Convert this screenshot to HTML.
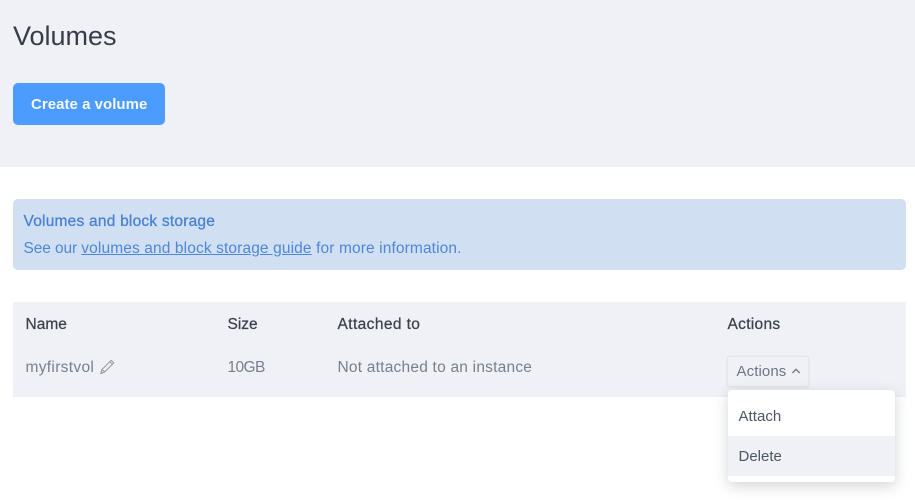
<!DOCTYPE html>
<html><head><meta charset="utf-8"><style>
html,body{margin:0;padding:0;background:#fff}
body{width:915px;height:500px;position:relative;overflow:hidden;font-family:"Liberation Sans",sans-serif}
.a{position:absolute;white-space:nowrap}
.h{font-size:15.5px;line-height:18px;color:#3b424d;-webkit-text-stroke:.25px #3b424d;top:315.5px}
.c{font-size:15.5px;line-height:18px;color:#77808f;top:358.5px}
.m{font-size:15px;line-height:18px;color:#4d5563}
</style></head><body>
<div class="a" style="left:0;top:0;width:915px;height:167px;background:#f0f1f6"></div>
<div class="a" style="left:13px;top:20px;font-size:27px;line-height:32px;color:#363d47">Volumes</div>
<div class="a" style="left:13px;top:83px;width:152px;height:42px;border-radius:5px;background:#4c9bff"></div>
<div class="a" style="left:31px;top:95.5px;font-size:15px;line-height:18px;font-weight:bold;color:#f3f8ff;letter-spacing:.03px">Create a volume</div>

<div class="a" style="left:13px;top:199px;width:893px;height:71px;border-radius:5px;background:#d0dff2"></div>
<div class="a" style="left:23.5px;top:212.5px;font-size:15.5px;line-height:18px;color:#4a81d2;letter-spacing:.22px;-webkit-text-stroke:.3px #4a81d2">Volumes and block storage</div>
<div class="a" style="left:23.5px;top:239.5px;font-size:15.5px;line-height:18px;color:#4f87d6;letter-spacing:.12px"><span style="letter-spacing:-.1px">See our </span><span style="text-decoration:underline">volumes and block storage guide</span> for more information.</div>

<div class="a" style="left:13px;top:302px;width:893px;height:95px;background:#f0f1f6"></div>
<div class="a h" style="left:25.5px">Name</div>
<div class="a h" style="left:227.5px">Size</div>
<div class="a h" style="left:337.5px;letter-spacing:.4px">Attached to</div>
<div class="a h" style="left:727.5px;letter-spacing:.3px">Actions</div>

<div class="a c" style="left:25.5px;letter-spacing:.32px">myfirstvol</div>
<svg class="a" style="left:99px;top:359px" width="16" height="16" viewBox="0 0 16 16" fill="none" stroke="#8d95a2" stroke-width="1" stroke-linejoin="round"><path d="M12.2 1.3 14.8 3.8 5.6 13 1.6 14.6 2.9 10.5Z"/><path d="M2.9 10.5 5.6 13M10.8 2.7 13.4 5.2"/></svg>
<div class="a c" style="left:227.5px;letter-spacing:-.6px">10GB</div>
<div class="a c" style="left:337.5px;letter-spacing:.22px">Not attached to an instance</div>

<div class="a" style="left:728px;top:357px;width:80px;height:29px;border-radius:2px;background:#f0f1f6;box-shadow:0 0 0 1.5px #e4e6ec,0 1px 3px rgba(0,0,0,.1)"></div>
<div class="a" style="left:736.5px;top:362.5px;font-size:15px;line-height:18px;color:#6d7685;letter-spacing:.1px">Actions</div>
<svg class="a" style="left:790.5px;top:367px" width="11" height="9" viewBox="0 0 11 9" fill="none" stroke="#6d7685" stroke-width="1.3"><path d="M1.5 6 5 2.3 8.8 6"/></svg>

<div class="a" style="left:728px;top:390px;width:167px;height:92px;border-radius:4px;background:#fff;box-shadow:0 4px 14px rgba(30,40,60,.2);overflow:hidden">
<div style="position:absolute;left:0;top:46px;width:167px;height:40px;background:#f0f1f6"></div>
</div>
<div class="a m" style="left:738.5px;top:407.5px;letter-spacing:.05px">Attach</div>
<div class="a m" style="left:738.5px;top:448px">Delete</div>
</body></html>
